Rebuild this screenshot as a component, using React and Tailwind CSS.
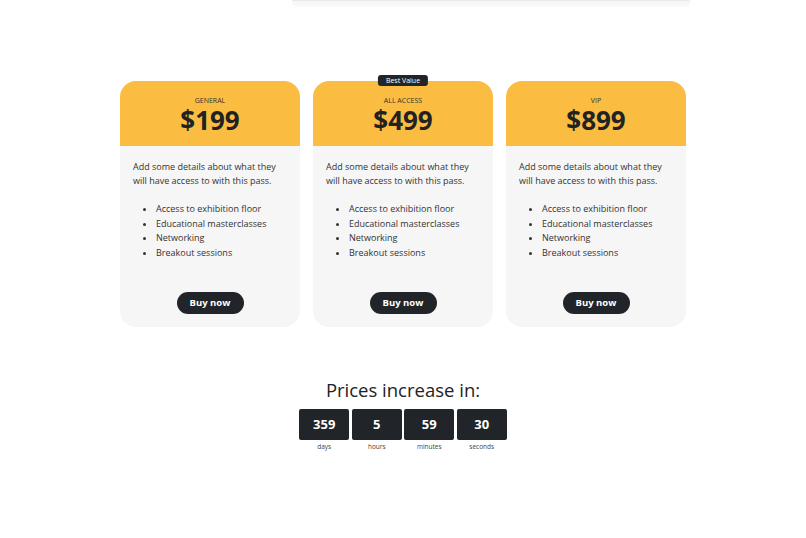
const passes = [
  { name: "GENERAL", price: "$199" },
  { name: "ALL ACCESS", price: "$499", badge: "Best Value" },
  { name: "VIP", price: "$899" },
];

const perks = [
  "Access to exhibition floor",
  "Educational masterclasses",
  "Networking",
  "Breakout sessions",
];

const countdown = [
  { value: "359", label: "days" },
  { value: "5", label: "hours" },
  { value: "59", label: "minutes" },
  { value: "30", label: "seconds" },
];

function PassCard({ pass }) {
  return (
    <div className="relative w-[180px] h-[246px] flex flex-col rounded-[16px] bg-[#f6f6f6]">
      {pass.badge && (
        <span className="absolute -top-[6px] left-1/2 -translate-x-1/2 bg-[#212529] text-white text-[7px] leading-[11px] px-[8px] rounded-[3px]">
          {pass.badge}
        </span>
      )}
      {/* header */}
      <div className="h-[65px] bg-[#fbbd41] rounded-t-[16px] flex flex-col items-center pt-[15px]">
        <p className="text-[7px] leading-[9px] text-[#333] uppercase">{pass.name}</p>
        <p className="mt-[1px] text-[26px] leading-[28px] font-bold text-[#222]">{pass.price}</p>
      </div>
      <div className="flex-1 flex flex-col px-[13px] pt-[14px] pb-[13px]">
        <p className="text-[9px] leading-[14px] text-[#333]">
          Add some details about what they will have access to with this pass.
        </p>
        <ul className="mt-[14px] pl-[23px] list-disc text-[9px] leading-[14.5px] text-[#333]">
          {perks.map((p) => (
            <li key={p}>{p}</li>
          ))}
        </ul>
        <div className="mt-auto flex justify-center">
          <button className="h-[22px] w-[67px] rounded-full bg-[#212529] text-white text-[9.5px] font-bold">
            Buy now
          </button>
        </div>
      </div>
    </div>
  );
}

export default function App() {
  return (
    <div className="min-h-screen bg-white font-['Open_Sans',sans-serif]">
      {/* bottom edge of the section above */}
      <div className="ml-[292px] w-[398px] h-[5px] rounded-b-[10px] bg-[#f7f7f7] border-t border-[#e9e9e9] shadow-[0_1px_3px_rgba(0,0,0,0.05)]" />

      <div className="flex justify-center gap-[13px] pt-[76px]">
        {passes.map((p) => (
          <PassCard key={p.name} pass={p} />
        ))}
      </div>

      <div className="flex flex-col items-center mt-[50px]">
        <h2 className="text-[18.5px] leading-[26px] text-[#222]">Prices increase in:</h2>
        <div className="flex gap-[2.5px] mt-[6px]">
          {countdown.map((c) => (
            <div key={c.label} className="flex flex-col items-center">
              <div className="w-[50px] h-[31px] rounded-[2px] bg-[#212529] text-white flex items-center justify-center text-[13px] font-bold">
                {c.value}
              </div>
              <span className="text-[6.5px] leading-[9px] mt-[2px] text-[#444]">{c.label}</span>
            </div>
          ))}
        </div>
      </div>
    </div>
  );
}
